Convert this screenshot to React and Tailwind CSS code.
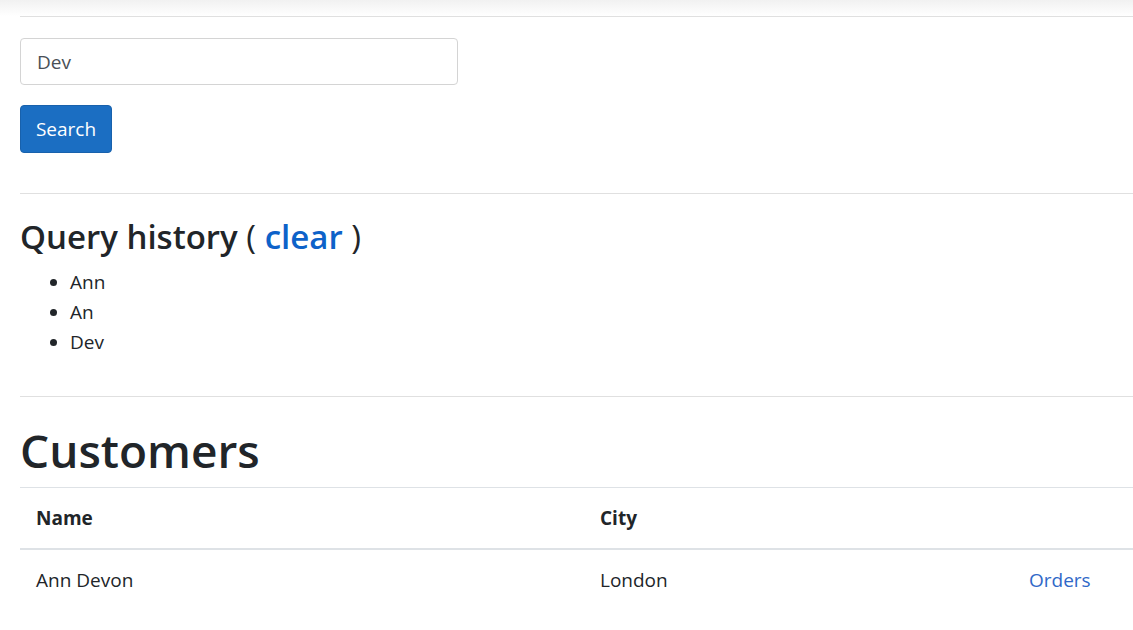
import React from 'react';

const history = ['Ann', 'An', 'Dev'];

const customers = [{ name: 'Ann Devon', city: 'London' }];

export default function App() {
  return (
    <div className="min-h-screen bg-white text-[#212529]" style={{ fontFamily: '"Open Sans", "Noto Sans", sans-serif' }}>
      {/* navbar shadow */}
      <div className="h-[16px] bg-gradient-to-b from-[#f1f1f1] to-white"></div>

      <div className="pl-[20px]">
        <hr className="border-0 border-t border-[#e0e0e0]" />

        <div className="pt-[21px]">
          <input
            type="text"
            defaultValue="Dev"
            className="w-[438px] h-[47px] rounded-[4px] border border-[#d4d4d4] px-[16px] text-[19px] text-[#495057] outline-none"
          />
        </div>

        <button className="mt-[20px] h-[48px] w-[92px] rounded-[4px] border border-[#1861ac] bg-[#1b6ec2] text-[19px] text-white">
          Search
        </button>

        <hr className="mt-[40px] border-0 border-t border-[#e0e0e0]" />

        <h2 className="mt-[19px] text-[33px] leading-[48px] font-semibold">
          Query history <span className="font-normal">(</span>{' '}
          <a href="#" className="text-[#0d62c9]">clear</a>{' '}
          <span className="font-normal">)</span>
        </h2>

        <ul className="mt-[6px] list-disc pl-[50px] text-[19px] leading-[30px]">
          {history.map((q, i) => (
            <li key={i}>{q}</li>
          ))}
        </ul>

        <hr className="mt-[39px] border-0 border-t border-[#e0e0e0]" />

        <h1 className="mt-[23px] text-[46px] leading-[60px] font-semibold">Customers</h1>

        <table className="mt-[7px] w-full border-collapse text-[19px] text-left">
          <thead>
            <tr className="border-t border-[#dee2e6]">
              <th className="w-[564px] h-[61px] px-[16px] font-bold border-b-2 border-[#dee2e6]">Name</th>
              <th className="w-[429px] px-[16px] font-bold border-b-2 border-[#dee2e6]">City</th>
              <th className="px-[16px] border-b-2 border-[#dee2e6]"></th>
            </tr>
          </thead>
          <tbody>
            {customers.map((c, i) => (
              <tr key={i}>
                <td className="h-[62px] px-[16px]">{c.name}</td>
                <td className="px-[16px]">{c.city}</td>
                <td className="px-[16px]">
                  <a href="#" className="text-[#3068c8]">Orders</a>
                </td>
              </tr>
            ))}
          </tbody>
        </table>
      </div>
    </div>
  );
}
